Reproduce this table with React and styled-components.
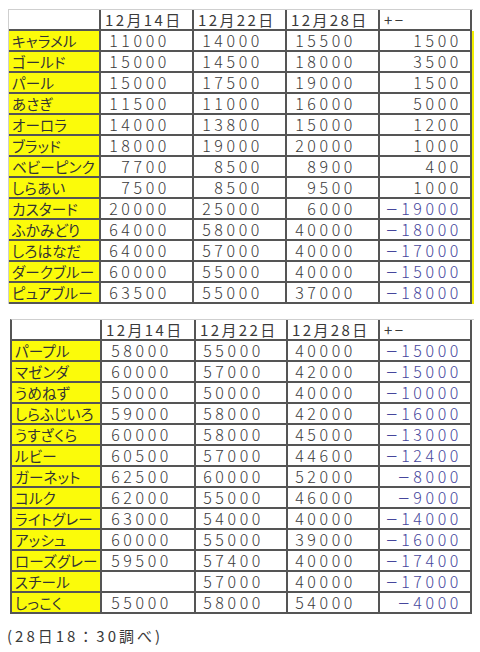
import styled, { createGlobalStyle } from "styled-components";

const GlobalStyle = createGlobalStyle`
  html, body {
    margin: 0;
    padding: 0;
    background: #ffffff;
  }
  body {
    font-family: "Noto Sans CJK JP", "Noto Sans", sans-serif;
    color: #3d3d3d;
  }
`;

const Page = styled.div`
  width: 480px;
  height: 652px;
  box-sizing: border-box;
  padding: 9px 8px 0 8px;
  display: flex;
  flex-direction: column;
  gap: 15px;
`;

const Sheet = styled.div`
  width: ${({ $width }) => $width}px;
  margin-left: ${({ $offset }) => $offset}px;
  border-top: 1px solid #cfcfcf;
  border-left: ${({ $darkLeft }) =>
    $darkLeft ? "2px solid #555" : "1px solid #cfcfcf"};
  display: flex;
  flex-direction: column;
`;

const Row = styled.div`
  display: grid;
  grid-template-columns: ${({ $cols }) => $cols.map((c) => `${c}px`).join(" ")};
  height: 21px;
`;

const Cell = styled.div`
  box-sizing: border-box;
  height: 21px;
  border-right: 2px solid #555;
  border-bottom: 2px solid #555;
  display: flex;
  align-items: center;
  white-space: nowrap;
  line-height: 17px;
`;

const NameCell = styled(Cell)`
  background: #fbfb0a;
  padding-left: 3px;
  font-size: 14.5px;
  font-feature-settings: "palt";
  letter-spacing: 0.2px;
  color: #333;
`;

const BlankCell = styled(Cell)`
  background: #ffffff;
`;

const HeadCell = styled(Cell)`
  padding-left: 4px;
  font-size: 15px;
  letter-spacing: 2.4px;
  color: #3a3a3a;
`;

const NumCell = styled(Cell)`
  justify-content: flex-end;
  padding-right: ${({ $last }) => ($last ? 8 : 22)}px;
  font-size: 16px;
  letter-spacing: 3.6px;
  font-weight: 300;
  color: ${({ $neg }) => ($neg ? "#46469c" : "#3a3a3a")};
  box-shadow: ${({ $edge }) => ($edge ? "2px 0 0 #f2ee00" : "none")};
`;

const Minus = styled.span`
  font-size: 13px;
  font-weight: 500;
  letter-spacing: 3px;
`;

const Note = styled.div`
  font-size: 15px;
  letter-spacing: 3px;
  line-height: 20px;
  color: #3a3a3a;
  margin-top: -3px;
  margin-left: -1px;
`;

const table1 = [
  ["キャラメル", "11000", "14000", "15500", "1500"],
  ["ゴールド", "15000", "14500", "18000", "3500"],
  ["パール", "15000", "17500", "19000", "1500"],
  ["あさぎ", "11500", "11000", "16000", "5000"],
  ["オーロラ", "14000", "13800", "15000", "1200"],
  ["ブラッド", "18000", "19000", "20000", "1000"],
  ["ベビーピンク", "7700", "8500", "8900", "400"],
  ["しらあい", "7500", "8500", "9500", "1000"],
  ["カスタード", "20000", "25000", "6000", "-19000"],
  ["ふかみどり", "64000", "58000", "40000", "-18000"],
  ["しろはなだ", "64000", "57000", "40000", "-17000"],
  ["ダークブルー", "60000", "55000", "40000", "-15000"],
  ["ピュアブルー", "63500", "55000", "37000", "-18000"],
];

const table2 = [
  ["パープル", "58000", "55000", "40000", "-15000"],
  ["マゼンダ", "60000", "57000", "42000", "-15000"],
  ["うめねず", "50000", "50000", "40000", "-10000"],
  ["しらふじいろ", "59000", "58000", "42000", "-16000"],
  ["うすざくら", "60000", "58000", "45000", "-13000"],
  ["ルビー", "60500", "57000", "44600", "-12400"],
  ["ガーネット", "62500", "60000", "52000", "-8000"],
  ["コルク", "62000", "55000", "46000", "-9000"],
  ["ライトグレー", "63000", "54000", "40000", "-14000"],
  ["アッシュ", "60000", "55000", "39000", "-16000"],
  ["ローズグレー", "59500", "57400", "40000", "-17400"],
  ["スチール", "", "57000", "40000", "-17000"],
  ["しっこく", "55000", "58000", "54000", "-4000"],
];

const headers = ["12月14日", "12月22日", "12月28日", "+−"];

function Value({ v }) {
  if (v.startsWith("-")) {
    return (
      <>
        <Minus>－</Minus>
        {v.slice(1)}
      </>
    );
  }
  return v;
}

function PriceTable({ rows, cols, width, offset, darkLeft, edge }) {
  return (
    <Sheet $width={width} $offset={offset} $darkLeft={darkLeft}>
      <Row $cols={cols}>
        <BlankCell />
        {headers.map((h) => (
          <HeadCell key={h}>{h}</HeadCell>
        ))}
      </Row>
      {rows.map((r) => (
        <Row $cols={cols} key={r[0]}>
          <NameCell>{r[0]}</NameCell>
          {r.slice(1).map((v, i) => (
            <NumCell
              key={i}
              $last={i === 3}
              $neg={v.startsWith("-")}
              $edge={edge && i === 3}
            >
              <Value v={v} />
            </NumCell>
          ))}
        </Row>
      ))}
    </Sheet>
  );
}

export default function App() {
  return (
    <>
      <GlobalStyle />
      <Page>
        <PriceTable
          rows={table1}
          cols={[92, 93, 93, 93, 92]}
          width={464}
          offset={0}
          edge
        />
        <PriceTable
          rows={table2}
          cols={[90, 94, 92, 92, 92]}
          width={462}
          offset={2}
          darkLeft
        />
        <Note>(28日18：30調べ)</Note>
      </Page>
    </>
  );
}
